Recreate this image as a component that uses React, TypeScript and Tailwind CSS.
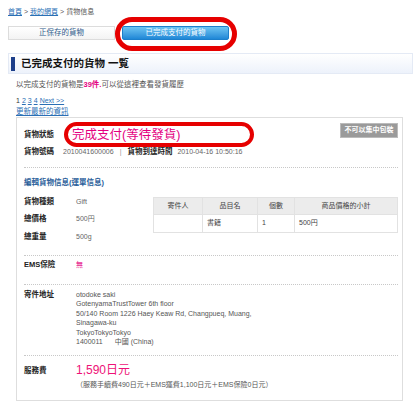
import React from "react";

const font = "font-['Liberation_Sans','Noto_Sans_CJK_TC',sans-serif]";

function Dotted({ className = "" }: { className?: string }) {
  return <div className={`border-t border-dotted border-[#c8c8c8] ${className}`} />;
}

function Field({ label, children, className = "" }: { label: string; children: React.ReactNode; className?: string }) {
  return (
    <div className={`flex h-[10px] items-center ${className}`}>
      <span className="w-[52px] shrink-0 text-[7.5px] font-bold text-[#222]">{label}</span>
      <span className="text-[7px] text-[#666]">{children}</span>
    </div>
  );
}

export default function App() {
  return (
    <div className={`h-[420px] w-[420px] overflow-hidden bg-white ${font}`}>
      <div className="pl-2 pr-[7px] pt-[7px]">
        {/* breadcrumb */}
        <div className="flex h-[10px] items-center gap-[2px] text-[7px] text-[#555]">
          <span className="text-[#2a6fb5] underline">首頁</span>
          <span>&gt;</span>
          <span className="text-[#2a6fb5] underline">我的網頁</span>
          <span>&gt;</span>
          <span>貨物信息</span>
        </div>

        {/* tabs */}
        <div className="relative mt-[9px] flex h-[14px] gap-[7px]">
          <div className="flex w-[107px] items-center justify-center border border-[#dcdcdc] bg-gradient-to-b from-white to-[#f3f3f3] text-[7.5px] text-[#2e5a8a]">
            正保存的貨物
          </div>
          <div className="flex w-[107px] items-center justify-center rounded-[2px] border border-[#1c7fcc] bg-gradient-to-b from-[#6cc4f2] to-[#1d87d6] text-[7.5px] text-white">
            已完成支付的貨物
          </div>
          <div className="absolute left-[107px] top-[-9px] h-[34px] w-[122px] rounded-full border-[5px] border-[#e60000]" />
        </div>

        {/* section header */}
        <div className="mt-[13px] flex h-[21px] items-center gap-[6px] border border-[#e4eaf5] bg-gradient-to-b from-white to-[#edf2fb]">
          <div className="ml-[2px] h-[14px] w-[4px] bg-[#1d3f8a]" />
          <span className="text-[10.5px] font-bold text-[#111]">已完成支付的貨物 一覧</span>
        </div>

        <div className="ml-[8px]">
          <div className="mt-[6px] flex h-[10px] items-center text-[7.5px] text-[#555]">
            以完成支付的貨物是<span className="font-bold text-[#e4007f]">39件.</span>可以從這裡查看發貨履歷
          </div>
          <div className="mt-[6px] flex h-[10px] items-center gap-[2px] text-[7px] text-[#333]">
            <span>1</span>
            <span className="text-[#2a6fb5] underline">2</span>
            <span className="text-[#2a6fb5] underline">3</span>
            <span className="text-[#2a6fb5] underline">4</span>
            <span className="text-[#2a6fb5] underline">Next &gt;&gt;</span>
          </div>
          <div className="mt-[1px] flex h-[10px] items-center text-[7.5px] text-[#2a6fb5] underline">更新最新的資訊</div>

          {/* card */}
          <div className="relative w-[387px] border border-[#dedede] pb-[10px] pl-[7px] pr-[4px] pt-[8px]">
            <div className="absolute right-[4px] top-[5px] flex h-[15px] w-[58px] items-center justify-center border border-[#bbb] bg-[#9a9a9a] text-[7px] font-bold text-white">
              不可以集中包裝
            </div>
            <div className="absolute left-[47px] top-[4px] h-[25px] w-[190px] rounded-full border-[4px] border-[#e60000]" />

            <div className="flex h-[18px] items-center">
              <span className="w-[48px] shrink-0 text-[7.5px] font-bold text-[#222]">貨物狀態</span>
              <span className="text-[12.5px] text-[#e4007f]">完成支付(等待發貨)</span>
            </div>
            <div className="mt-[3px] flex h-[10px] items-center text-[7px] text-[#666]">
              <span className="w-[39px] shrink-0 text-[7.5px] font-bold text-[#222]">貨物號碼</span>
              <span>2010041600006</span>
              <span className="mx-[6px] text-[#999]">|</span>
              <span className="mr-[5px] text-[7.5px] font-bold text-[#222]">貨物到達時間</span>
              <span>2010-04-16 10:50:16</span>
            </div>

            <Dotted className="mt-[10px]" />
            <div className="mt-[10px] flex h-[10px] items-center text-[7.5px] font-bold text-[#2a5e9a]">
              編輯貨物信息(運單信息)
            </div>

            <div className="mt-[9px] flex">
              <div className="w-[129px] shrink-0">
                <Field label="貨物種類">Gift</Field>
                <Field label="總價格" className="mt-[7px]">500円</Field>
                <Field label="總重量" className="mt-[8px]">500g</Field>
              </div>
              <table className="h-[35px] w-[245px] border-collapse text-[7px] text-[#444]">
                <thead>
                  <tr className="h-[17px] bg-[#ececec]">
                    <th className="w-[49px] border border-[#e2e2e2] font-normal">寄件人</th>
                    <th className="w-[55px] border border-[#e2e2e2] font-normal">品目名</th>
                    <th className="w-[37px] border border-[#e2e2e2] font-normal">個數</th>
                    <th className="border border-[#e2e2e2] font-normal">商品價格的小計</th>
                  </tr>
                </thead>
                <tbody>
                  <tr className="h-[18px]">
                    <td className="border border-[#e2e2e2]" />
                    <td className="border border-[#e2e2e2] pl-[4px]">書籍</td>
                    <td className="border border-[#e2e2e2] pl-[4px]">1</td>
                    <td className="border border-[#e2e2e2] pl-[4px]">500円</td>
                  </tr>
                </tbody>
              </table>
            </div>

            <Dotted className="mt-[13px]" />
            <Field label="EMS保險" className="mt-[4px]">
              <span className="text-[#e4007f]">無</span>
            </Field>

            <Dotted className="mt-[14px]" />
            <div className="mt-[5px] flex">
              <span className="h-[10px] w-[52px] shrink-0 text-[7.5px] font-bold leading-[10px] text-[#222]">寄件地址</span>
              <div className="text-[7px] leading-[9.4px] text-[#555]">
                <div>otodoke saki</div>
                <div>GotenyamaTrustTower 6th floor</div>
                <div>50/140 Room 1226 Haey Keaw Rd, Changpueq, Muang,</div>
                <div>Sinagawa-ku</div>
                <div>TokyoTokyoTokyo</div>
                <div>
                  1400011<span className="ml-[12px]">中國 (China)</span>
                </div>
              </div>
            </div>

            <Dotted className="mt-[9px]" />
            <div className="mt-[6px] flex">
              <span className="mt-[4px] h-[10px] w-[52px] shrink-0 text-[7.5px] font-bold leading-[10px] text-[#222]">服務費</span>
              <div>
                <div className="h-[16px] text-[12px] leading-[16px] text-[#ee1177]">1,590日元</div>
                <div className="mt-[2px] h-[10px] text-[7px] leading-[10px] text-[#555]">
                  （服務手續費490日元＋EMS運費1,100日元＋EMS保險0日元）
                </div>
              </div>
            </div>
          </div>
        </div>
      </div>
    </div>
  );
}
